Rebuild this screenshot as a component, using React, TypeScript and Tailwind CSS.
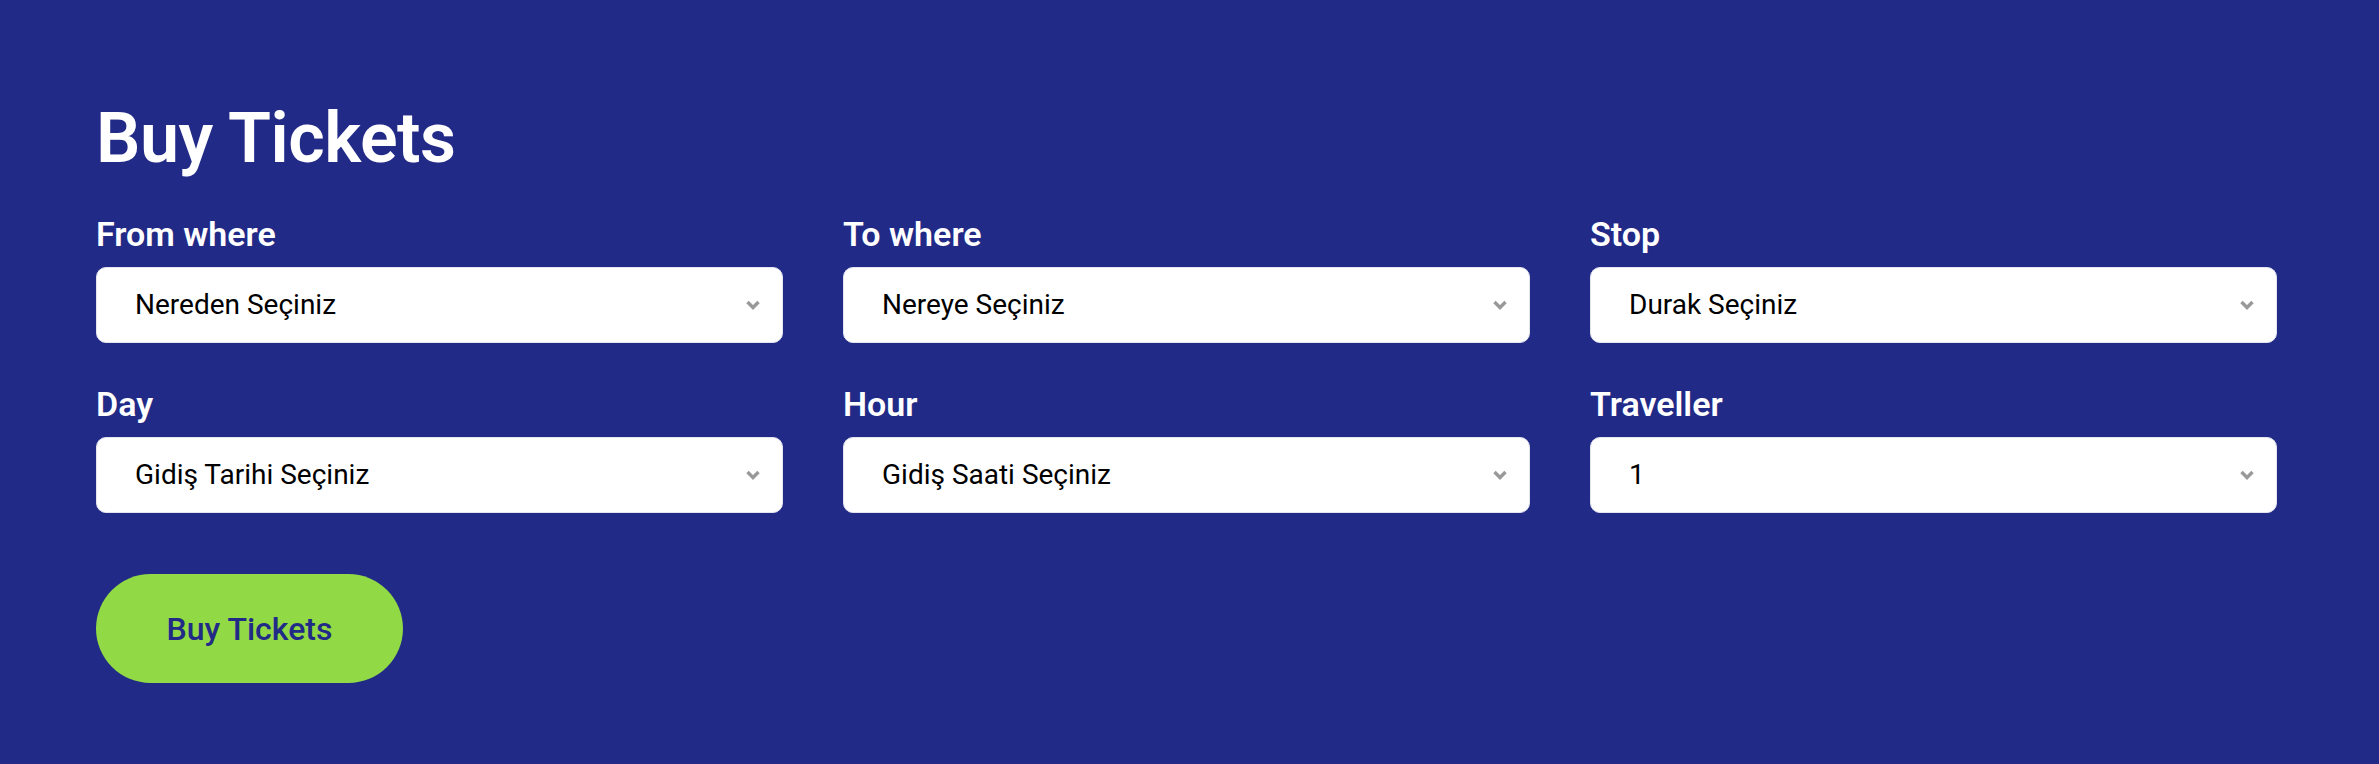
import React from "react";

const fields = [
  { label: "From where", value: "Nereden Seçiniz" },
  { label: "To where", value: "Nereye Seçiniz" },
  { label: "Stop", value: "Durak Seçiniz" },
  { label: "Day", value: "Gidiş Tarihi Seçiniz" },
  { label: "Hour", value: "Gidiş Saati Seçiniz" },
  { label: "Traveller", value: "1" },
];

function Chevron() {
  return (
    <svg width="14" height="10" viewBox="0 0 14 10" className="shrink-0">
      <path d="M1.5 2 L7 7.5 L12.5 2" fill="none" stroke="#999999" strokeWidth="3.4" strokeLinejoin="miter" />
    </svg>
  );
}

export default function App() {
  return (
    <div
      className="min-h-[764px] w-full bg-[#212a87] pl-[96px] pt-[103px]"
      style={{ fontFamily: "Roboto, 'Noto Sans', sans-serif" }}
    >
      {/* TITLE */}
      <h1 className="text-[70px] leading-none font-semibold tracking-[-0.5px] text-white">
        Buy Tickets
      </h1>

      {/* FORM GRID */}
      <div className="mt-[44px] grid w-[2181px] grid-cols-3 gap-x-[60px] gap-y-[44px]">
        {fields.map((f) => (
          <div key={f.label} className="flex flex-col">
            <label className="text-[34px] leading-none font-semibold text-white">
              {f.label}
            </label>
            <div className="mt-[16px] flex h-[76px] items-center justify-between rounded-[10px] border border-[#e3e5ee] bg-white pl-[38px] pr-[22px]">
              <span className="text-[28px] text-black">{f.value}</span>
              <Chevron />
            </div>
          </div>
        ))}
      </div>

      {/* BUTTON */}
      <button className="mt-[61px] flex h-[109px] w-[307px] items-center justify-center rounded-full bg-[#91d945] text-[32px] font-medium text-[#222a87]">
        Buy Tickets
      </button>
    </div>
  );
}
